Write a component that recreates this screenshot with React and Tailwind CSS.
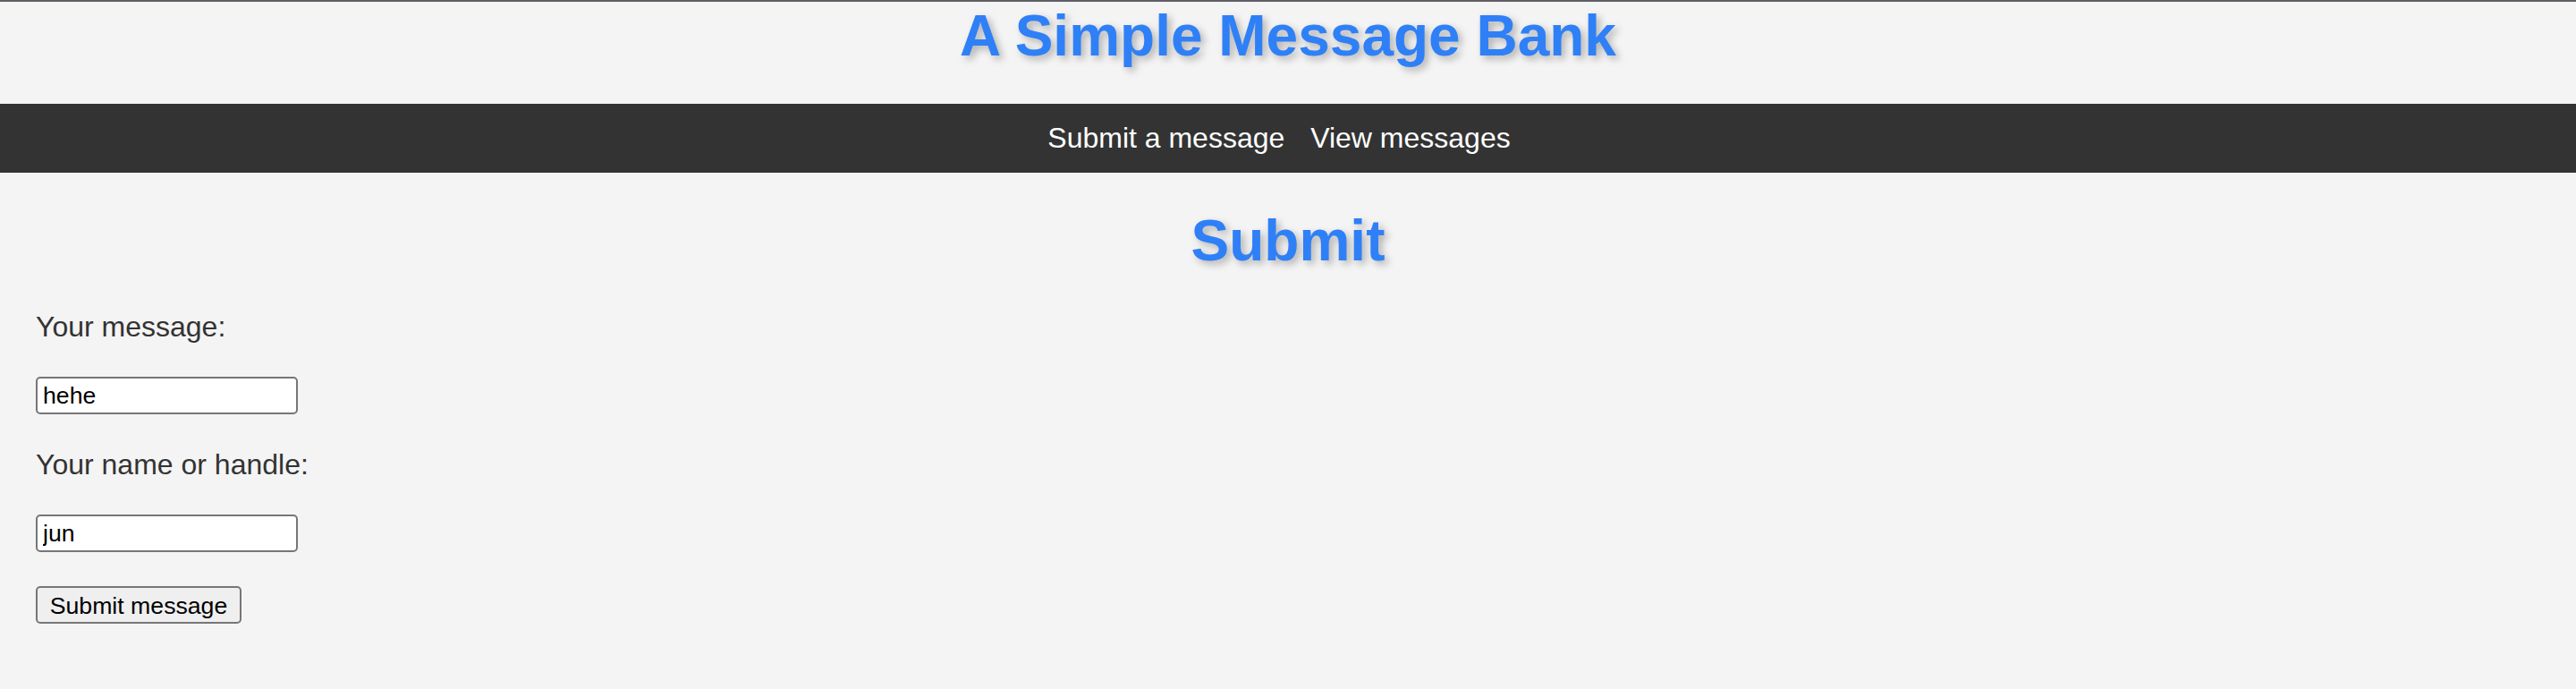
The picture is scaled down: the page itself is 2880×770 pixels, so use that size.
import { useState } from 'react'

export default function App() {
  const [message, setMessage] = useState('hehe')
  const [handle, setHandle] = useState('jun')

  return (
    <div className="min-h-screen bg-[#f4f4f4] font-['Liberation_Sans',Arial,sans-serif]">
      <div className="h-[2px] bg-[#5f5e63]" />

      {/* Header */}
      <h1 className="pt-[2px] text-center text-[64px] leading-[72px] font-bold text-[#2f80f7] [text-shadow:4px_4px_8px_rgba(0,0,0,0.28)]">
        A Simple Message Bank
      </h1>

      {/* Nav */}
      <nav className="mt-[40px] h-[77px] bg-[#333333] pt-[20px] text-center text-[32px] leading-[37px] text-white">
        <a href="#" className="mr-[20px]">Submit a message</a>{' '}
        <a href="#" className="mr-[20px]">View messages</a>
      </nav>

      {/* Form */}
      <h2 className="mt-[40px] text-center text-[64px] leading-[72px] font-bold text-[#2f80f7] [text-shadow:4px_4px_8px_rgba(0,0,0,0.28)]">
        Submit
      </h2>

      <form className="flex flex-col items-start px-[40px]" onSubmit={e => e.preventDefault()}>
        <label className="mt-[42px] text-[32px] leading-[36px] text-[#333333]">Your message:</label>
        <input
          type="text"
          value={message}
          onChange={e => setMessage(e.target.value)}
          className="mt-[38px] h-[42px] w-[293px] rounded-[5px] border-2 border-[#767676] bg-white px-[6px] text-[26.67px] text-black outline-none"
        />
        <label className="mt-[38px] text-[32px] leading-[36px] text-[#333333]">Your name or handle:</label>
        <input
          type="text"
          value={handle}
          onChange={e => setHandle(e.target.value)}
          className="mt-[38px] h-[42px] w-[293px] rounded-[5px] border-2 border-[#767676] bg-white px-[6px] text-[26.67px] text-black outline-none"
        />
        <button
          type="submit"
          className="mt-[38px] h-[42px] w-[230px] rounded-[5px] border-2 border-[#767676] bg-[#efefef] text-center text-[26.67px] text-black"
        >
          Submit message
        </button>
      </form>
    </div>
  )
}
